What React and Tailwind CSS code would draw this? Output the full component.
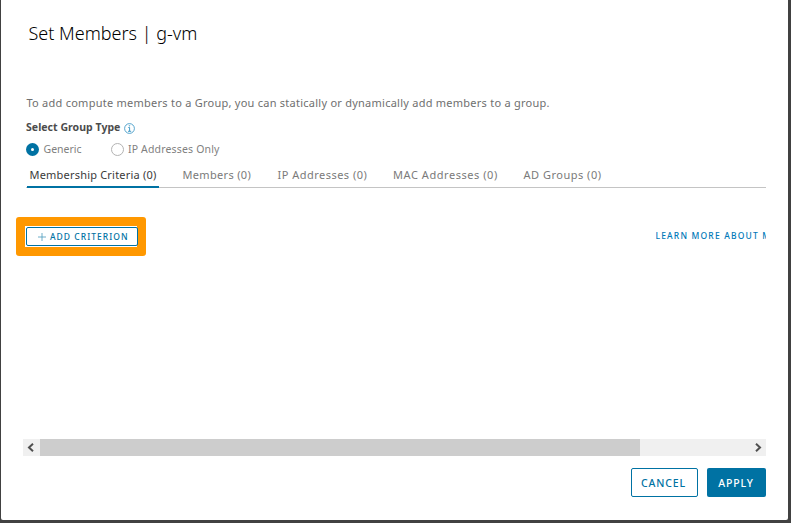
import React from "react";

const tabs = [
  { label: "Membership Criteria (0)", width: "w-[132px] mr-[23.5px]", tracking: "tracking-[0.2px]", active: true },
  { label: "Members (0)", width: "w-[95px]", tracking: "tracking-[0.32px]" },
  { label: "IP Addresses (0)", width: "w-[115.5px]", tracking: "tracking-[0.48px]" },
  { label: "MAC Addresses (0)", width: "w-[130.5px]", tracking: "tracking-[0.55px]" },
  { label: "AD Groups (0)", width: "w-[90px]", tracking: "tracking-[0.5px]" },
];

function Tab({ label, width, tracking, active }) {
  return (
    <button
      role="tab"
      aria-selected={!!active}
      className={`relative h-[21px] shrink-0 text-left text-[11px] leading-[16px] ${width} ${tracking} ${
        active ? "pl-[2.5px] text-[#3a3a3a]" : "pl-0 text-[#7a7a7a]"
      }`}
    >
      <span className="block h-[21px]">{label}</span>
      {active && <span className="absolute bottom-0 left-0 h-[2px] w-full bg-[#0072a3]" />}
    </button>
  );
}

function InfoIcon() {
  return (
    <svg width="11" height="11" viewBox="0 0 11 11" fill="none" stroke="#2d8fc1" aria-label="Info">
      <circle cx="5.5" cy="5.5" r="4.9" strokeWidth="0.8" />
      <path d="M4.3 4.5h1.3v3.6M4 8.3h3.2" strokeWidth="0.9" />
      <circle cx="5.4" cy="2.8" r="0.4" strokeWidth="0.6" />
    </svg>
  );
}

export default function App() {
  return (
    <div className="h-[523px] w-[791px] overflow-hidden bg-[#414141] pl-px font-['Noto_Sans',sans-serif] whitespace-nowrap">
      <main className="flex h-[520px] w-[787px] flex-col rounded-b-[2px] bg-white pl-[22px] pr-[22px]">
        <h1 className="h-[95px] pl-[5.5px] pt-[21px] text-[18px] leading-[24px] font-light text-black">
          Set Members | g-vm
        </h1>
        <p className="h-[25px] pl-[3.5px] text-[11px] leading-[15px] tracking-[0.25px] text-[#6f6f6f]">
          To add compute members to a Group, you can statically or dynamically add members to a group.
        </p>
        <div className="flex h-[22px] pl-[3px]">
          <span className="w-[98px] text-[10.5px] leading-[15px] font-bold tracking-[0.04px] text-[#4c4c4c]">Select Group Type</span>
          <span className="pt-[3px]"><InfoIcon /></span>
        </div>
        <div className="flex h-[25px] items-start pl-[3px] pt-px text-[10.5px] leading-[15px] text-[#7f7f7f]">
          <span className="flex h-[13px] w-[13px] items-center justify-center rounded-full bg-[#0072a3]">
            <span className="h-[3px] w-[3px] rounded-full bg-white" />
          </span>
          <span className="-mt-px w-[72px] pl-[4.5px]">Generic</span>
          <span className="h-[13px] w-[13px] rounded-full border border-[#b3b3b3]" />
          <span className="-mt-px pl-[4px] tracking-[0.16px]">IP Addresses Only</span>
        </div>
        <nav role="tablist" className="ml-[3px] flex h-[21px] border-b border-[#c4c4c4] pl-px">
          {tabs.map((tab) => <Tab key={tab.label} {...tab} />)}
        </nav>
        <section className="-ml-[7px] mt-[29px] flex h-[39px] items-start justify-between">
          <div className="h-[39px] w-[130px] rounded-[3px] bg-[#ff9800] pr-[8px] pl-[9px] pt-[9px]">
            <div className="h-[21px] w-[112px] bg-white pl-px pt-px">
              <button className="flex h-[19px] w-[112px] items-center rounded-[2px] border border-[#0072a3] pl-[11px] text-[#0072a3]">
                <svg width="8" height="8" viewBox="0 0 8 8" stroke="#4a99bb" strokeWidth="0.8"><path d="M4 0v8M0 4h8" /></svg>
                <span className="pl-[4px] pt-px text-[8.5px] font-medium tracking-[1.03px]">ADD CRITERION</span>
              </button>
            </div>
          </div>
          <a className="w-[110.5px] overflow-hidden pt-[12px] text-[8.5px] leading-[14px] font-medium tracking-[1.17px] text-[#0079b8]">LEARN MORE ABOUT MEMBERS</a>
        </section>
        <div className="mt-[183px] flex h-[17px] shrink-0 bg-[#f0f0f0]">
          <span className="flex h-[17px] w-[17px] items-center pl-[3px]"><svg width="9" height="9" viewBox="0 0 9 9" fill="none" stroke="#505050" strokeWidth="2"><path d="M7 .8L3 4.5l4 3.7" /></svg></span>
          <span className="h-[17px] w-[600px] bg-[#cdcdcd]" />
          <span className="ml-auto flex h-[17px] w-[16px] items-center justify-center"><svg width="9" height="9" viewBox="0 0 9 9" fill="none" stroke="#505050" strokeWidth="2"><path d="M2 .8l4 3.7-4 3.7" /></svg></span>
        </div>
        <footer className="mt-[12px] flex justify-end gap-[9px] text-[10.5px] font-medium tracking-[0.9px]">
          <button className="h-[29px] w-[67px] rounded-[2px] border border-[#0072a3] pt-[2px] pr-[2px] text-[#0072a3]">CANCEL</button>
          <button className="h-[29px] w-[59px] rounded-[2px] bg-[#0072a3] pt-[2px] pr-px text-white">APPLY</button>
        </footer>
      </main>
    </div>
  );
}
